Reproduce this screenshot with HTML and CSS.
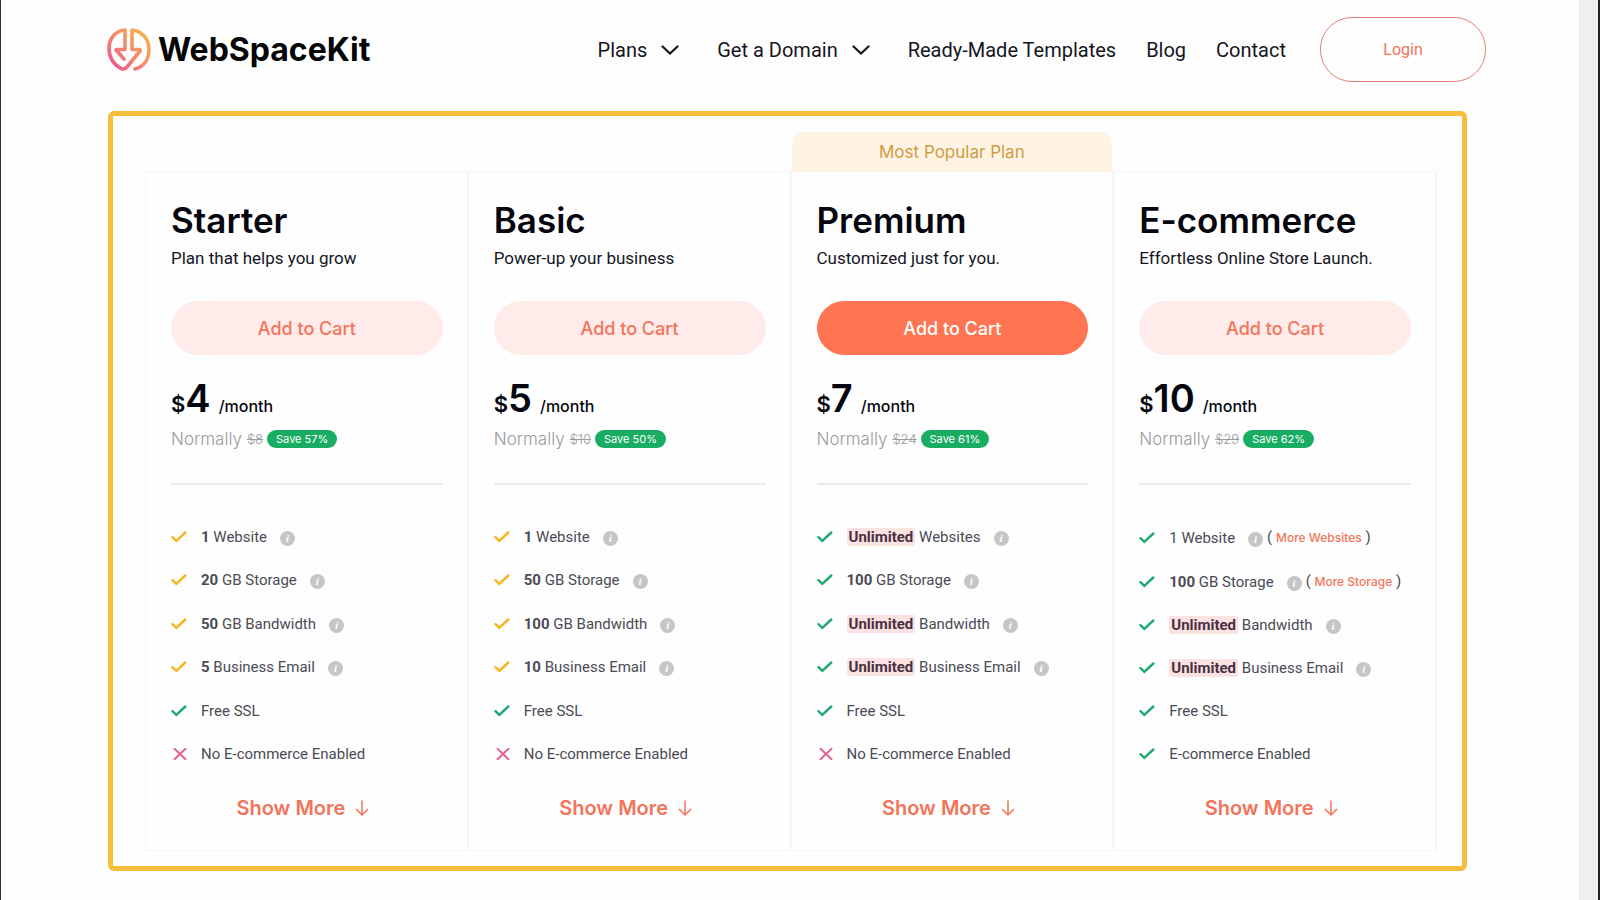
FILE: index.html
```html
<!DOCTYPE html>
<html lang="en">
<head>
  <meta charset="UTF-8">
  <meta name="viewport" content="width=device-width, initial-scale=1">
  <title>WebSpaceKit – Plans</title>
  <link rel="stylesheet" href="styles.css">
</head>
<body>
  <!-- Shared icons -->
  <svg class="icon-defs" aria-hidden="true">
    <symbol id="check" viewBox="0 0 16 12">
      <path d="M1.5 6.2 5.3 9.8 14.3 1.5" fill="none" stroke="currentColor" stroke-width="2.4" stroke-linecap="round"/>
    </symbol>
    <symbol id="cross" viewBox="0 0 16 12">
      <path d="M3.5 0.7 14.500 11.300M14.500 0.7 3.500 11.300" fill="none" stroke="currentColor" stroke-width="1.9" stroke-linecap="round"/>
    </symbol>
    <symbol id="chevron" viewBox="0 0 18 10">
      <path d="M1.5 1.5 9 8.5 16.5 1.5" fill="none" stroke="currentColor" stroke-width="2.2" stroke-linecap="round"/>
    </symbol>
    <symbol id="arrow" viewBox="0 0 14 16">
      <path d="M7 0.5V15M1 9 7 15 13 9" fill="none" stroke="currentColor" stroke-width="1.5"/>
    </symbol>
  </svg>

  <div class="page">
    <header class="header">
      <a class="logo" href="#">
        <svg class="logo-mark" viewBox="0 0 44 43" aria-hidden="true">
          <defs>
            <linearGradient id="logoGradient" x1="0" y1="1" x2="1" y2="0">
              <stop offset="0.1" stop-color="#ee5c8c"/>
              <stop offset="0.5" stop-color="#f58b6c"/>
              <stop offset="0.9" stop-color="#f6ae4c"/>
            </linearGradient>
          </defs>
          <path d="M17 31 9.5 22.5Q8.5 21.5 10 21.5H18V2C9 2.5 2 10 2 20.5C2 29 6 36 14 40.5Q17.5 42 20 39L33 23Q34 21.5 32.5 21.5H25V2C35 3 42 11 42 21.5C42 31 37 38.500 28 41" fill="none" stroke="url(#logoGradient)" stroke-width="3.6" stroke-linecap="round" stroke-linejoin="round"/>
        </svg>
        <span>WebSpaceKit</span>
      </a>
      <nav class="nav">
        <button class="nav-menu" type="button">Plans <svg class="chevron"><use href="#chevron"/></svg></button>
        <button class="nav-menu" type="button">Get a Domain <svg class="chevron"><use href="#chevron"/></svg></button>
        <a href="#">Ready-Made Templates</a>
        <a href="#">Blog</a>
        <a href="#">Contact</a>
        <a class="login" href="#">Login</a>
      </nav>
    </header>

    <main class="frame">
      <div class="plans">
        <section class="plan">
          <h2>Starter</h2>
          <p class="tagline">Plan that helps you grow</p>
          <button class="cart" type="button">Add to Cart</button>
          <p class="price"><span class="currency">$</span><span class="amount">4</span><span class="period">/month</span></p>
          <p class="normally">Normally <s>$8</s><span class="save">Save 57%</span></p>
          <hr>
          <ul class="features">
            <li><svg class="mark yellow"><use href="#check"/></svg><span><b>1</b> Website</span><i class="info">i</i></li>
            <li><svg class="mark yellow"><use href="#check"/></svg><span><b>20</b> GB Storage</span><i class="info">i</i></li>
            <li><svg class="mark yellow"><use href="#check"/></svg><span><b>50</b> GB Bandwidth</span><i class="info">i</i></li>
            <li><svg class="mark yellow"><use href="#check"/></svg><span><b>5</b> Business Email</span><i class="info">i</i></li>
            <li><svg class="mark green"><use href="#check"/></svg><span>Free SSL</span></li>
            <li><svg class="mark red"><use href="#cross"/></svg><span>No E-commerce Enabled</span></li>
          </ul>
          <button class="more" type="button">Show More <svg class="arrow"><use href="#arrow"/></svg></button>
        </section>

        <section class="plan">
          <h2>Basic</h2>
          <p class="tagline">Power-up your business</p>
          <button class="cart" type="button">Add to Cart</button>
          <p class="price"><span class="currency">$</span><span class="amount">5</span><span class="period">/month</span></p>
          <p class="normally">Normally <s>$10</s><span class="save">Save 50%</span></p>
          <hr>
          <ul class="features">
            <li><svg class="mark yellow"><use href="#check"/></svg><span><b>1</b> Website</span><i class="info">i</i></li>
            <li><svg class="mark yellow"><use href="#check"/></svg><span><b>50</b> GB Storage</span><i class="info">i</i></li>
            <li><svg class="mark yellow"><use href="#check"/></svg><span><b>100</b> GB Bandwidth</span><i class="info">i</i></li>
            <li><svg class="mark yellow"><use href="#check"/></svg><span><b>10</b> Business Email</span><i class="info">i</i></li>
            <li><svg class="mark green"><use href="#check"/></svg><span>Free SSL</span></li>
            <li><svg class="mark red"><use href="#cross"/></svg><span>No E-commerce Enabled</span></li>
          </ul>
          <button class="more" type="button">Show More <svg class="arrow"><use href="#arrow"/></svg></button>
        </section>

        <section class="plan popular">
          <div class="badge">Most Popular Plan</div>
          <h2>Premium</h2>
          <p class="tagline">Customized just for you.</p>
          <button class="cart" type="button">Add to Cart</button>
          <p class="price"><span class="currency">$</span><span class="amount">7</span><span class="period">/month</span></p>
          <p class="normally">Normally <s>$24</s><span class="save">Save 61%</span></p>
          <hr>
          <ul class="features">
            <li><svg class="mark green"><use href="#check"/></svg><span><mark>Unlimited</mark> Websites</span><i class="info">i</i></li>
            <li><svg class="mark green"><use href="#check"/></svg><span><b>100</b> GB Storage</span><i class="info">i</i></li>
            <li><svg class="mark green"><use href="#check"/></svg><span><mark>Unlimited</mark> Bandwidth</span><i class="info">i</i></li>
            <li><svg class="mark green"><use href="#check"/></svg><span><mark>Unlimited</mark> Business Email</span><i class="info">i</i></li>
            <li><svg class="mark green"><use href="#check"/></svg><span>Free SSL</span></li>
            <li><svg class="mark red"><use href="#cross"/></svg><span>No E-commerce Enabled</span></li>
          </ul>
          <button class="more" type="button">Show More <svg class="arrow"><use href="#arrow"/></svg></button>
        </section>

        <section class="plan">
          <h2>E-commerce</h2>
          <p class="tagline">Effortless Online Store Launch.</p>
          <button class="cart" type="button">Add to Cart</button>
          <p class="price"><span class="currency">$</span><span class="amount">10</span><span class="period">/month</span></p>
          <p class="normally">Normally <s>$29</s><span class="save">Save 62%</span></p>
          <hr>
          <ul class="features">
            <li><svg class="mark green"><use href="#check"/></svg><span>1 Website</span><i class="info">i</i><span class="extra">( <a href="#">More Websites</a> )</span></li>
            <li><svg class="mark green"><use href="#check"/></svg><span><b>100</b> GB Storage</span><i class="info">i</i><span class="extra">( <a href="#">More Storage</a> )</span></li>
            <li><svg class="mark green"><use href="#check"/></svg><span><mark>Unlimited</mark> Bandwidth</span><i class="info">i</i></li>
            <li><svg class="mark green"><use href="#check"/></svg><span><mark>Unlimited</mark> Business Email</span><i class="info">i</i></li>
            <li><svg class="mark green"><use href="#check"/></svg><span>Free SSL</span></li>
            <li><svg class="mark green"><use href="#check"/></svg><span>E-commerce Enabled</span></li>
          </ul>
          <button class="more" type="button">Show More <svg class="arrow"><use href="#arrow"/></svg></button>
        </section>
      </div>
    </main>
  </div>
  <div class="scroll-track"></div>
</body>
</html>
```
FILE: styles.css
```css
:root {
  --text: #15151f;
  --heading: #06060f;
  --feature: #4b4b55;
  --orange: #f2745a;
  --line: #f6f6f7;
  --heading-font: Inter, "Liberation Sans", sans-serif;
  --body-font: Roboto, "Liberation Sans", sans-serif;
}

* {
  box-sizing: border-box;
}

body {
  display: flex;
  min-height: 100vh;
  margin: 0;
  border-left: 1px solid #333;
  border-right: 2px solid #222;
  background-color: #fefefe;
  color: var(--text);
  font-family: var(--body-font);
}

h2, p, ul {
  margin: 0;
  padding: 0;
}

a {
  color: inherit;
  text-decoration: none;
}

button {
  border: none;
  padding: 0;
  background: none;
  color: inherit;
  font-family: inherit;
  cursor: pointer;
}

.icon-defs {
  position: absolute;
  width: 0;
  height: 0;
}

.page {
  flex: 1;
}

.scroll-track {
  width: 19px;
  background-color: #efefef;
}

/* Header */
.header {
  display: flex;
  justify-content: space-between;
  align-items: center;
  padding: 17px 93px 0 106px;
}

.logo {
  display: flex;
  align-items: center;
  gap: 7px;
  color: #050505;
  font-family: var(--heading-font);
  font-size: 32px;
  font-weight: 700;
}

.logo-mark {
  width: 44px;
  height: 43px;
}

.nav {
  display: flex;
  align-items: center;
  gap: 30px;
  font-size: 20px;
}

.nav-menu {
  display: flex;
  align-items: center;
  gap: 14px;
  margin-right: 8px;
  font-size: 20px;
}

.chevron {
  width: 18px;
  height: 10px;
}

.login {
  width: 166px;
  margin-left: 4px;
  border: 1px solid #e58079;
  border-radius: 32px;
  color: var(--orange);
  font-size: 16px;
  line-height: 63px;
  text-align: center;
}

/* Plans */
.frame {
  margin: 29px 112px 29px 107px;
  padding: 55px 25px 15px 32px;
  border: 5px solid #f6be3b;
  border-radius: 6px;
}

.plans {
  display: grid;
  grid-template-columns: repeat(4, 1fr);
  border-top: 1px solid var(--line);
  border-left: 1px solid var(--line);
}

.plan {
  position: relative;
  display: flex;
  flex-direction: column;
  padding: 28px 24px 30px 25px;
  border-right: 2px solid var(--line);
  border-bottom: 1px solid var(--line);
}

.badge {
  position: absolute;
  left: 0;
  right: 0;
  bottom: 100%;
  border-radius: 10px 10px 0 0;
  background-color: #fff3e6;
  color: #cf9d3f;
  font-family: var(--heading-font);
  font-size: 17px;
  line-height: 40px;
  text-align: center;
}

h2 {
  color: var(--heading);
  font-family: var(--heading-font);
  font-size: 35px;
  font-weight: 600;
  line-height: 40px;
}

.tagline {
  margin-top: 6px;
  font-size: 17px;
  line-height: 24px;
}

.cart {
  height: 54px;
  margin-top: 31px;
  border-radius: 27px;
  background-color: #ffebe9;
  color: var(--orange);
  font-family: var(--heading-font);
  font-size: 18px;
  font-weight: 500;
}

.popular .cart {
  background-color: #ff7452;
  color: #fff;
}

.price {
  display: flex;
  align-items: baseline;
  margin-top: 21px;
  color: var(--heading);
  font-family: var(--heading-font);
  font-weight: 600;
  line-height: 44px;
}

.currency {
  font-size: 22px;
}

.amount {
  font-size: 38px;
}

.period {
  margin-left: 8px;
  font-size: 16px;
  font-weight: 500;
}

.normally {
  display: flex;
  align-items: center;
  margin-top: 1px;
  color: #9a9aa0;
  font-family: var(--heading-font);
  font-size: 17px;
  font-weight: 300;
  line-height: 20px;
}

.normally s {
  margin: 0 4px 0 5px;
  font-size: 13px;
}

.save {
  padding: 0 9px;
  border-radius: 9px;
  background-color: #19ad63;
  color: #fff;
  font-size: 11px;
  font-weight: 400;
  line-height: 18px;
}

hr {
  width: 100%;
  margin: 34px 0 0;
  border: none;
  border-top: 2px solid #ebebed;
}

.features {
  display: flex;
  flex-direction: column;
  justify-content: space-between;
  min-height: 241px;
  margin-top: 40px;
  list-style: none;
  color: var(--feature);
  font-size: 15px;
  line-height: 24px;
}

.features li {
  display: flex;
  align-items: center;
}

.mark {
  width: 16px;
  height: 12px;
  margin-right: 14px;
}

.yellow {
  color: #f6b51e;
}

.green {
  color: #1fa971;
}

.red {
  color: #e8608a;
}

mark {
  padding: 0 2px;
  border-radius: 2px;
  background-color: #fbe3e2;
  color: #4a3043;
  font-weight: 700;
}

.info {
  width: 15px;
  height: 15px;
  margin: 3px 0 0 13px;
  border-radius: 50%;
  background-color: #c6c6c9;
  color: #fff;
  font-family: "Liberation Serif", serif;
  font-size: 11px;
  font-weight: 700;
  line-height: 15px;
  text-align: center;
}

.extra {
  margin-left: 4px;
}

.extra a {
  color: var(--orange);
  font-family: var(--heading-font);
  font-size: 12px;
  font-weight: 500;
}

.more {
  display: flex;
  align-items: center;
  align-self: center;
  gap: 10px;
  margin: 30px 8px 0 0;
  color: var(--orange);
  font-family: var(--heading-font);
  font-size: 20px;
  font-weight: 600;
  line-height: 24px;
}

.arrow {
  width: 14px;
  height: 16px;
}
```
